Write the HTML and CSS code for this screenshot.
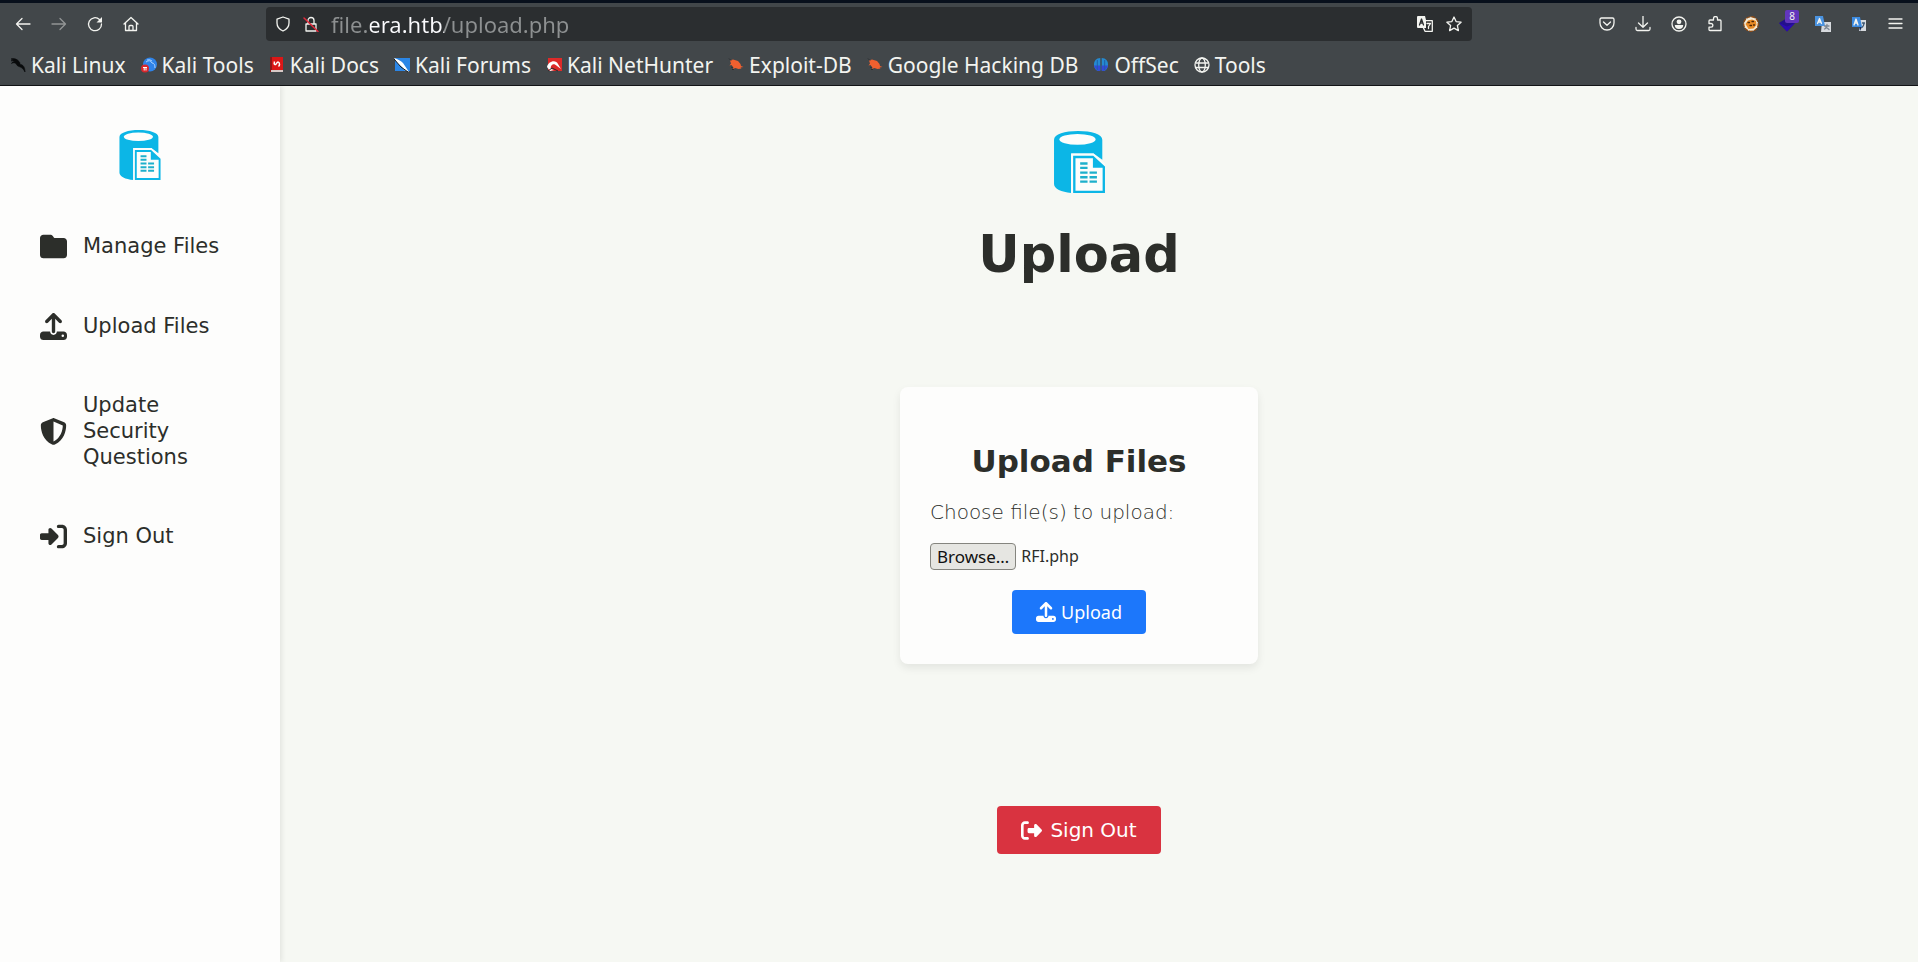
FILE: index.html
```html
<!DOCTYPE html>
<html lang="en">
<head>
<meta charset="utf-8">
<meta name="viewport" content="width=device-width, initial-scale=1">
<title>Upload</title>
<link rel="stylesheet" href="styles.css">
</head>
<body>
<svg class="sprite" aria-hidden="true">
  <symbol id="logo" viewBox="0 0 152 185">
    <path fill="#0cb6e6" d="M0 26C0 10 32 0 72 0s72 10 72 26v60L118 67H51v118C22 182 0 172 0 158z"/>
    <ellipse cx="70" cy="25" rx="54" ry="16" fill="#fdfdfb"/>
    <path fill="#fdfdfb" d="M51 67h67l34 30v88H51z"/>
    <path fill="#0cb6e6" fill-rule="evenodd" d="M57 74h60l35 32v79H57zm7 7v97h81v-68h-29V81z"/>
    <path stroke="#1fb0cc" stroke-width="7" d="M78 97h22M78 110h22M78 124h22M78 138h22M78 151h22M106 124h22M106 138h22M106 151h22"/>
  </symbol>
  <symbol id="upload" viewBox="0 0 512 512">
    <path fill="currentColor" d="M288 109.300V352c0 17.700-14.300 32-32 32s-32-14.300-32-32V109.300l-73.400 73.400c-12.500 12.500-32.800 12.500-45.300 0s-12.500-32.800 0-45.300l128-128c12.500-12.500 32.800-12.500 45.300 0l128 128c12.500 12.500 12.500 32.800 0 45.300s-32.800 12.500-45.300 0L288 109.300zM64 352H192c0 35.300 28.700 64 64 64s64-28.700 64-64H448c35.300 0 64 28.700 64 64v32c0 35.300-28.700 64-64 64H64c-35.300 0-64-28.700-64-64V416c0-35.300 28.700-64 64-64zM432 456a24 24 0 1 0 0-48 24 24 0 1 0 0 48z"/>
  </symbol>
  <symbol id="lizard" viewBox="0 0 16 16">
    <path d="M2 3.500l3-1 5 1.500 2.500 3 .5 2 2.500 1-3 .5 1 1-3 .5-3-1-3 1 1-1.500L3.500 8l-2 .5L3 6.500z" fill="#f0602f"/>
    <path d="M3 10l2 1M4 12.500h2M1 1.500l2 2" stroke="#2b2e30" fill="none"/>
  </symbol>
</svg>

<header class="browser">
  <div class="toolbar">
    <div class="tools">
      <button class="tool" aria-label="Back"><svg viewBox="0 0 16 16"><path d="M15 8H1.500M7 2.500L1.500 8 7 13.500"/></svg></button>
      <button class="tool dim" aria-label="Forward"><svg viewBox="0 0 16 16"><path d="M1 8h13.500M9 2.500L14.500 8 9 13.500"/></svg></button>
      <button class="tool" aria-label="Reload"><svg viewBox="0 0 16 16"><path d="M12.500 3.500A6.500 6.500 0 1 0 14.500 8"/><path class="solid" d="M15 1v5.500H9.500z"/></svg></button>
      <button class="tool" aria-label="Home"><svg viewBox="0 0 16 16"><path d="M1 8l7-6.500L15 8M2.500 7v7.500h11V7M6 14.500v-4q0-1 1-1h2q1 0 1 1v4"/></svg></button>
    </div>
    <div class="urlbar">
      <svg class="glyph" viewBox="0 0 16 16"><path d="M8 1l6 2.200v3.800c0 4-2.500 6.500-6 8-3.500-1.500-6-4-6-8V3.200z"/></svg>
      <svg class="glyph" viewBox="0 0 16 16"><path d="M3 8h10v7H3zM5 8V4.500a3 3 0 0 1 6 0V8"/><path class="slash" d="M1 2l14 13.500"/></svg>
      <input class="address" type="text" aria-label="Address" value="file.era.htb/upload.php">
      <button class="tool small" aria-label="Translate page"><svg viewBox="0 0 16 16"><path class="solid" d="M1 0h7l1 4v8H1q-1 0-1-1V1q0-1 1-1z"/><path class="ink" d="M2.500 9L4.500 3l2 6M3.300 7h2.500"/><path d="M9 4.700h6.300v10.600H8L6.500 12"/><path d="M10 7.500h3.500l-2 3v2"/></svg></button>
      <button class="tool small" aria-label="Bookmark this page"><svg viewBox="0 0 16 16"><path d="M8 1l2.100 4.600 5 .6-3.700 3.400 1 5L8 12.100l-4.400 2.500 1-5L.900 6.200l5-.6z"/></svg></button>
    </div>
    <div class="tools">
      <button class="tool" aria-label="Pocket"><svg viewBox="0 0 16 16"><path d="M2.500 2h11q1.500 0 1.500 1.500V7a7 7 0 0 1-14 0V3.500Q1 2 2.500 2zM4.500 6L8 9.300 11.500 6"/></svg></button>
      <button class="tool" aria-label="Downloads"><svg viewBox="0 0 16 16"><path d="M8 0v11M3.500 7L8 11.300 12.500 7M1 11.500V13q0 1.500 1.500 1.500h11Q15 14.500 15 13v-1.500"/></svg></button>
      <button class="tool" aria-label="Account"><svg viewBox="0 0 16 16"><circle cx="8" cy="8" r="7"/><circle class="solid" cx="8" cy="5.800" r="2.400"/><path class="solid" d="M3.800 9h8.400a4.200 4 0 0 1-8.400 0z"/></svg></button>
      <button class="tool" aria-label="Extensions"><svg viewBox="0 0 16 16"><path d="M2 7.500V5q0-1 1-1h3.500V2.500a2 2 0 0 1 4 0V4H13q1 0 1 1v9.500H3q-1 0-1-1v-2.300h2a1.800 1.800 0 0 0 0-3.700z"/></svg></button>
      <button class="tool" aria-label="Cookie editor"><svg viewBox="0 0 16 16"><circle cx="8" cy="8" r="7.300" fill="#f3ead6" stroke="#8b4a16" stroke-dasharray="3 2"/><path d="M2.500 8l2.500-3.500 4-1 4 1.500.5 4-3 3.500-5 .5z" fill="#e88a25" stroke="none"/><path d="M5 6.500h1.500M9 5.500h1.500M7 9.500h1.500M10.500 9h1" stroke="#4b2507"/></svg></button>
      <button class="tool badged" aria-label="Proxy extension"><svg viewBox="0 0 16 16"><path d="M0 7l8-5 8 5-8 8.500z" fill="#23108c" stroke="none"/><path d="M0 7l8 3.500L16 7l-8 8.500z" fill="#2c0bb0" stroke="none"/></svg><span class="badge">8</span></button>
      <button class="tool" aria-label="Translator"><svg viewBox="0 0 16 16"><path d="M7 6h9v10H6z" fill="#d7dade" stroke="none"/><path d="M0 0h8l2 10H0z" fill="#4a93e0" stroke="none"/><path d="M2.500 7.500L4.500 2.500l2 5M3.300 6h2.500"/><path d="M9.500 10h4.500M12 8.500c0 2.500-1 4-2.500 4.500M11 11l3 2.500" stroke="#7b8794"/></svg></button>
      <button class="tool" aria-label="Page translator"><svg viewBox="0 0 16 16"><path d="M8 4h7v11H8z" fill="#d7dade" stroke="none"/><path d="M1 1h8l2 10H1z" fill="#3b8ae0" stroke="none"/><path d="M3 9l2-6 2 6M3.700 7h2.600"/><path d="M8 11h3l-2 4z" fill="#142c58" stroke="none"/><path d="M11.500 7h2M13 7c0 2-.5 3-1.500 4" stroke="#35516f"/></svg></button>
      <button class="tool" aria-label="Menu"><svg viewBox="0 0 16 16"><path d="M2 3h13M2 7.500h13M2 12h13"/></svg></button>
    </div>
  </div>
  <nav class="bookmarks" aria-label="Bookmarks">
    <a href="#"><svg viewBox="0 0 16 16"><path d="M1 2c3-1 6 0 8 2.500 1 1 1 2 1 3 3 0 5 2.500 5 7.500-1.500-3-3-4.500-6-5.500C7.500 9 6.500 8 6 6.500 4.500 5.500 3 5.500 1.500 6.500 2 5 3.500 4.500 5 4.500 4 3.500 2.500 3.500 1 4 2 3 3 3 4 3z" fill="#080a0b" stroke="#080a0b" stroke-width=".6"/></svg>Kali Linux</a>
    <a href="#"><svg viewBox="0 0 16 16"><circle cx="9" cy="7.500" r="7" fill="#2f83e8"/><path d="M5 5q4-3 6 1 3 0 3 5M6 3q3-1 5 1" fill="none" stroke="#a9d2ff"/><circle cx="4" cy="11.500" r="4" fill="#d8272c"/><path d="M2 10.500h4M3.200 10.500v3M5 10.500v3" stroke="#fff" fill="none"/></svg>Kali Tools</a>
    <a href="#"><svg viewBox="0 0 16 16"><path d="M2 0h12v13H2z" fill="#dc1717"/><path d="M1 0h2v15H1z" fill="#8b1719"/><path d="M2 13h12v2H2z" fill="#d8c9c6"/><path d="M5.500 4.500c-1 3 1 4 2 2s3-2 3 1c0 1-.5 1.500-1 2" fill="none" stroke="#fff" stroke-width="1.500"/></svg>Kali Docs</a>
    <a href="#"><svg viewBox="0 0 16 16"><path d="M1 1h15v13H1z" fill="#2b86e6"/><path d="M0 1c4 1 7 3 9 5l2 3 4 6c-4-1-6-3-7-5C5 8 2 5 0 1z" fill="#fff"/><path d="M0 2l7 8 7 5" stroke="#11171c" fill="none"/></svg>Kali Forums</a>
    <a href="#"><svg viewBox="0 0 16 16"><path d="M2 1h14v13H2z" fill="#dd2a29"/><path d="M1 10c1-6 9-8 11-3l3 5-4-3c-4-4-7 0-6 3l3 1-4 1z" fill="#fff"/><path d="M2 14l4-3 6 3" stroke="#252a2d" fill="none"/></svg>Kali NetHunter</a>
    <a href="#"><svg><use href="#lizard"/></svg>Exploit-DB</a>
    <a href="#"><svg><use href="#lizard"/></svg>Google Hacking DB</a>
    <a href="#"><svg viewBox="0 0 16 16"><path d="M7.300 1v12.500C3 15 1 11 1 7.500S3 1 7.300 1z" fill="#258ad0"/><path d="M8.700 1v12.500C13 15 15 11 15 7.500S13 1 8.700 1z" fill="#258ad0"/><path d="M1 8.500h6.300v5C4 15 2 12 1 8.500zM8.700 8.500H15c-1 3.500-3 6.500-6.300 5z" fill="#3549d8"/><path d="M4.300 3v10M11.700 3v10" stroke="#1f5fa8"/></svg>OffSec</a>
    <a href="#"><svg viewBox="0 0 16 16" fill="none" stroke="#f3f4f0" stroke-width="1.300"><circle cx="8" cy="8" r="7"/><ellipse cx="8" cy="8" rx="3.300" ry="7"/><path d="M1.500 6h13M1.500 10.500h13"/></svg>Tools</a>
  </nav>
</header>

<div class="page">
  <aside class="sidebar">
    <svg class="side-logo" role="img" aria-label="Era storage"><use href="#logo"/></svg>
    <nav class="menu" aria-label="Main">
      <a href="#"><svg viewBox="0 0 512 512"><path fill="currentColor" d="M64 480H448c35.300 0 64-28.700 64-64V160c0-35.300-28.700-64-64-64H288c-10.100 0-19.600-4.700-25.600-12.800L243.200 57.600C231.100 41.500 212.100 32 192 32H64C28.700 32 0 60.700 0 96V416c0 35.300 28.700 64 64 64z"/></svg><span>Manage Files</span></a>
      <a href="#"><svg><use href="#upload"/></svg><span>Upload Files</span></a>
      <a href="#"><svg viewBox="0 0 512 512"><path fill="currentColor" d="M256 0c4.600 0 9.200 1 13.400 2.900L457.700 82.800c22 9.300 38.400 31 38.300 57.200c-.5 99.200-41.300 280.700-213.600 363.200c-16.700 8-36.100 8-52.800 0C57.300 420.700 16.500 239.200 16 140c-.1-26.200 16.300-47.900 38.300-57.200L242.700 2.900C246.800 1 251.400 0 256 0zm0 66.800V444.800C394 378 431.100 230.100 432 141.400L256 66.800z"/></svg><span>Update Security Questions</span></a>
      <a href="#"><svg viewBox="0 0 512 512"><path fill="currentColor" d="M217.900 105.900L340.700 228.700c7.200 7.200 11.300 17.100 11.300 27.300s-4.100 20.100-11.300 27.300L217.900 406.100c-6.400 6.400-15 9.900-24 9.900c-18.700 0-33.900-15.200-33.900-33.900l0-62.100L32 320c-17.700 0-32-14.300-32-32l0-64c0-17.700 14.300-32 32-32l128 0 0-62.100c0-18.700 15.200-33.900 33.900-33.900c9 0 17.600 3.600 24 9.900zM352 416l64 0c17.700 0 32-14.300 32-32l0-256c0-17.700-14.300-32-32-32l-64 0c-17.700 0-32-14.300-32-32s14.300-32 32-32l64 0c53 0 96 43 96 96l0 256c0 53-43 96-96 96l-64 0c-17.700 0-32-14.300-32-32s14.300-32 32-32z"/></svg><span>Sign Out</span></a>
    </nav>
  </aside>
  <main class="content">
    <svg class="main-logo" role="img" aria-label="Era storage"><use href="#logo"/></svg>
    <h1>Upload</h1>
    <form class="card">
      <h2>Upload Files</h2>
      <label class="prompt" for="files">Choose file(s) to upload:</label>
      <div class="picker">
        <input id="files" class="native-file" type="file" multiple tabindex="-1">
        <button class="browse" type="button">Browse…</button>
        <output for="files">RFI.php</output>
      </div>
      <button class="submit" type="button"><svg><use href="#upload"/></svg>Upload</button>
    </form>
    <a class="signout" href="#"><svg viewBox="0 0 512 512"><path fill="currentColor" d="M377.900 105.900L500.700 228.700c7.200 7.200 11.300 17.100 11.300 27.300s-4.100 20.100-11.300 27.300L377.900 406.100c-6.400 6.400-15 9.900-24 9.900c-18.700 0-33.900-15.200-33.900-33.900l0-62.100-128 0c-17.700 0-32-14.300-32-32l0-64c0-17.700 14.300-32 32-32l128 0 0-62.100c0-18.700 15.200-33.900 33.900-33.900c9 0 17.600 3.600 24 9.900zM160 96L96 96c-17.700 0-32 14.300-32 32l0 256c0 17.700 14.300 32 32 32l64 0c17.700 0 32 14.300 32 32s-14.300 32-32 32l-64 0c-53 0-96-43-96-96L0 128C0 75 43 32 96 32l64 0c17.700 0 32 14.300 32 32s-14.300 32-32 32z"/></svg>Sign Out</a>
  </main>
</div>
</body>
</html>
```
FILE: styles.css
```css
* { box-sizing: border-box; }

body {
  margin: 0;
  min-height: 100vh;
  display: flex;
  flex-direction: column;
  background: #f6f8f3;
  color: #2c2e2a;
  font-family: "DejaVu Sans", sans-serif;
}

a { color: inherit; text-decoration: none; }
button { font: inherit; color: inherit; }
.sprite { position: absolute; width: 0; height: 0; }

/* Browser chrome */
.browser {
  background: #42474a;
  border-top: 3px solid #08101c;
  border-bottom: 1px solid #121416;
  color: #f3f4f0;
  font-family: "Noto Sans", sans-serif;
}

.toolbar {
  display: flex;
  align-items: center;
  justify-content: space-between;
  padding: 4px 5px 0;
}

.tools { display: flex; }

.tool {
  width: 36px;
  height: 34px;
  padding: 0;
  border: 0;
  background: none;
  display: flex;
  align-items: center;
  justify-content: center;
}

.tool.small { width: 29px; }
.tool.dim { opacity: 0.45; }

.tool svg, .glyph {
  width: 16px;
  height: 16px;
  flex: none;
  fill: none;
  stroke: #f3f4f0;
  stroke-width: 1.3;
  stroke-linecap: round;
  stroke-linejoin: round;
}

.tool .solid { fill: #f3f4f0; stroke: none; }
.tool .ink { stroke: #2b2e30; }
.glyph .slash { stroke: #e0283a; stroke-width: 1.5; }

.badged { position: relative; }
.badge {
  position: absolute;
  top: 3px;
  right: 6px;
  padding: 0 4px;
  border-radius: 2px;
  background: #6236bd;
  font-size: 10px;
  line-height: 13px;
}

.urlbar {
  flex: 0 1 63.2%;
  height: 34px;
  display: flex;
  align-items: center;
  gap: 12px;
  padding: 0 3px 0 9px;
  border-radius: 4px;
  background: #2b2e30;
}
.urlbar .tool + .tool { margin-left: -12px; }

/* The host is brighter than the rest of the address. */
.address {
  flex: 1;
  min-width: 0;
  padding: 0;
  border: 0;
  outline: 0;
  font: 22px/34px "Noto Sans", sans-serif;
  color: transparent;
  background: linear-gradient(90deg, #8d9091 39px, #fbfbfe 39px 113px, #8d9091 113px);
  -webkit-background-clip: text;
  background-clip: text;
}

.bookmarks {
  display: flex;
  gap: 15px;
  padding: 9px 10px 5px;
  font-size: 21px;
  line-height: 30px;
  white-space: nowrap;
}
.bookmarks a { display: flex; align-items: center; gap: 5px; }
.bookmarks svg { width: 16px; height: 16px; flex: none; }

/* Page */
.page { flex: 1; display: flex; }

.sidebar {
  flex: 0 0 280px;
  padding: 44px 40px;
  background: #fdfdfc;
  box-shadow: 2px 0 5px rgba(0, 0, 0, 0.08);
}
.side-logo { display: block; width: 42px; height: 50px; margin: 0 auto 52px; }

.menu { display: flex; flex-direction: column; gap: 52px; }
.menu a {
  display: flex;
  align-items: center;
  gap: 16px;
  min-height: 28px;
  font-size: 21px;
  line-height: 26px;
}
.menu svg { width: 27px; height: 27px; flex: none; }

.content {
  flex: 1;
  display: flex;
  flex-direction: column;
  align-items: center;
  padding: 45px 40px 45px 0;
}
.main-logo { width: 51px; height: 62px; }
h1 { margin: 31px 0 102px; font-size: 51px; line-height: 61px; }

.card {
  width: 358px;
  display: flex;
  flex-direction: column;
  padding: 56px 30px 30px;
  border-radius: 8px;
  background: #fdfdfc;
  box-shadow: 0 4px 8px rgba(0, 0, 0, 0.08);
}
h2 { margin: 0 0 20px; text-align: center; font-size: 31px; line-height: 36px; }
.prompt { font-size: 20px; font-weight: 200; line-height: 26px; }
.picker {
  display: flex;
  align-items: center;
  gap: 5px;
  margin: 18px 0 20px;
  font: 16px/25px "Noto Sans", sans-serif;
}
.native-file {
  position: absolute;
  width: 1px;
  height: 1px;
  opacity: 0;
}
.browse {
  padding: 0 6px;
  border: 1px solid #85857f;
  border-radius: 4px;
  background: #e6e6e2;
  color: #111;
  font-size: 17px;
}

.submit, .signout {
  align-self: center;
  display: flex;
  align-items: center;
  border: 0;
  border-radius: 4px;
  color: #fff;
}
.submit {
  gap: 5px;
  padding: 10px 24px;
  background: #1c77fb;
  font: 18px/24px "Noto Sans", sans-serif;
}
.submit svg { width: 20px; height: 20px; }
.signout {
  gap: 8px;
  margin-top: 142px;
  padding: 12px 24px;
  background: #d93340;
  font-size: 20px;
  line-height: 24px;
}
.signout svg { width: 21px; height: 21px; }
```
